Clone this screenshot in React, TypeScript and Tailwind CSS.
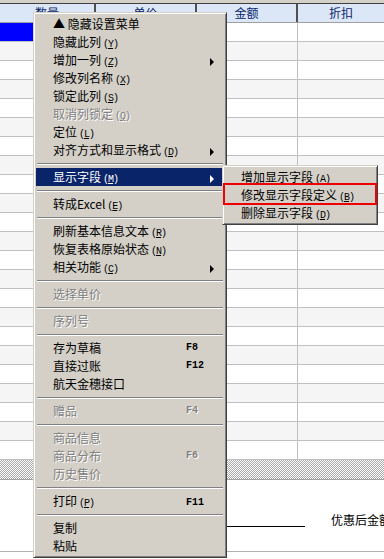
import React from "react"

type Item =
    | { label: string; m?: string; sc?: string; arrow?: boolean; dis?: boolean; active?: boolean }
    | "sep"

const menu: Item[] = [
    { label: "▲ 隐藏设置菜单" },
    { label: "隐藏此列", m: "Y" },
    { label: "增加一列", m: "Z", arrow: true },
    { label: "修改列名称", m: "X" },
    { label: "锁定此列", m: "S" },
    { label: "取消列锁定", m: "Q", dis: true },
    { label: "定位", m: "L" },
    { label: "对齐方式和显示格式", m: "D", arrow: true },
    "sep",
    { label: "显示字段", m: "M", arrow: true, active: true },
    "sep",
    { label: "转成Excel", m: "E" },
    "sep",
    { label: "刷新基本信息文本", m: "R" },
    { label: "恢复表格原始状态", m: "N" },
    { label: "相关功能", m: "C", arrow: true },
    "sep",
    { label: "选择单价", dis: true },
    "sep",
    { label: "序列号", dis: true },
    "sep",
    { label: "存为草稿", sc: "F8" },
    { label: "直接过账", sc: "F12" },
    { label: "航天金穗接口" },
    "sep",
    { label: "赠品", sc: "F4", dis: true },
    "sep",
    { label: "商品信息", dis: true },
    { label: "商品分布", sc: "F6", dis: true },
    { label: "历史售价", dis: true },
    "sep",
    { label: "打印", m: "P", sc: "F11" },
    "sep",
    { label: "复制" },
    { label: "粘贴" },
]

const subMenu = [
    { label: "增加显示字段", m: "A" },
    { label: "修改显示字段定义", m: "B" },
    { label: "删除显示字段", m: "D" },
]

function Mnemonic({ m }: { m: string }) {
    return (
        <span className="ml-[2px] font-['Liberation_Mono',monospace] text-[10px] tracking-[-1px]">
            (<span className="underline underline-offset-1">{m}</span>)
        </span>
    )
}

function Arrow({ white }: { white?: boolean }) {
    return (
        <span
            className={
                white
                    ? "block w-0 h-0 border-y-[4px] border-y-transparent border-l-[4px] border-l-white"
                    : "block w-0 h-0 border-y-[4px] border-y-transparent border-l-[4px] border-l-black"
            }
        />
    )
}

function Separator() {
    return (
        <div className="h-[9px] flex items-center px-[1px]">
            <div className="w-full h-[2px] border-t border-t-[#808080] border-b border-b-white" />
        </div>
    )
}

function MenuRow({ item }: { item: Exclude<Item, "sep"> }) {
    const tone = item.active
        ? "bg-[#0a246a] text-white"
        : item.dis
        ? "text-[#808080] [text-shadow:1px_1px_0_#ffffff]"
        : "text-black"
    return (
        <div className={`grid grid-cols-[17px_133px_1fr_14px] h-[18px] items-center leading-[18px] ${tone}`}>
            <span />
            <span className="whitespace-nowrap">
                {item.label}
                {item.m && <Mnemonic m={item.m} />}
            </span>
            <span className="font-['Liberation_Mono',monospace] text-[10px] font-bold">{item.sc}</span>
            <span className="flex items-center">{item.arrow && <Arrow white={item.active} />}</span>
        </div>
    )
}

const frame =
    "absolute bg-[#d4d0c8] border-l border-t border-[#d4d0c8] border-r border-b border-r-[#404040] border-b-[#404040] shadow-[inset_1px_1px_0_#ffffff,inset_-1px_-1px_0_#808080] p-[2px] text-[12px]"

export default function App() {
    const rows = Array.from({ length: 23 }, (_, i) => i)
    return (
        <div className="relative w-[384px] h-[559px] overflow-hidden bg-white font-['Noto_Sans_CJK_SC','Noto_Sans',sans-serif] text-[12px]">
            <div className="h-[3px] bg-[#d4d0c8]" />
            <div className="h-[1px] bg-[#404040]" />
            <div className="flex h-[19px] bg-[#dbe6f6] border-b border-[#a0a0a0] text-[#0a246a] leading-[18px]">
                <div className="w-[96px] border-r-2 border-[#505050] text-center">数量</div>
                <div className="w-[101px] border-r-2 border-[#505050] text-center">单价</div>
                <div className="w-[101px] border-r-2 border-[#505050] text-center">金额</div>
                <div className="flex-1 text-center">折扣</div>
            </div>
            {rows.map((i) => (
                <div key={i} className={`flex h-[19px] border-b border-[#c0c0c0] ${i % 2 ? "bg-[#f5f5f5]" : "bg-white"}`}>
                    <div className={`w-[96px] border-r border-[#c0c0c0] ${i === 0 ? "bg-[#0000ff]" : ""}`} />
                    <div className="w-[101px] border-r border-[#c0c0c0]" />
                    <div className="w-[101px] border-r border-[#c0c0c0]" />
                    <div className="flex-1" />
                </div>
            ))}
            <div className="h-[20px] border-b border-[#a0a0a0] bg-[repeating-conic-gradient(#a8a8a8_0%_25%,#ffffff_0%_50%)] bg-[length:2px_2px]" />
            <div className="relative h-[79px]">
                <div className="flex items-end pt-[33px]">
                    <div className="ml-[150px] w-[155px] h-[14px] shrink-0 border-b border-black" />
                    <div className="ml-[26px] shrink-0 whitespace-nowrap leading-[14px]">优惠后金额</div>
                </div>
                <div className="mt-[24px] h-[1px] bg-[#b0b0b0]" />
            </div>

            <div className={`${frame} left-[33px] top-[12px] w-[194px]`}>
                {menu.map((item, i) => (item === "sep" ? <Separator key={i} /> : <MenuRow key={i} item={item} />))}
            </div>

            <div className={`${frame} left-[222px] top-[165px] w-[156px]`}>
                {subMenu.map((s) => (
                    <div key={s.label} className="h-[18px] leading-[18px] pl-[16px] whitespace-nowrap">
                        {s.label}
                        <Mnemonic m={s.m} />
                    </div>
                ))}
            </div>
            <div className="absolute left-[223px] top-[183px] w-[154px] h-[22px] border-2 border-[#ee0000]" />
        </div>
    )
}
